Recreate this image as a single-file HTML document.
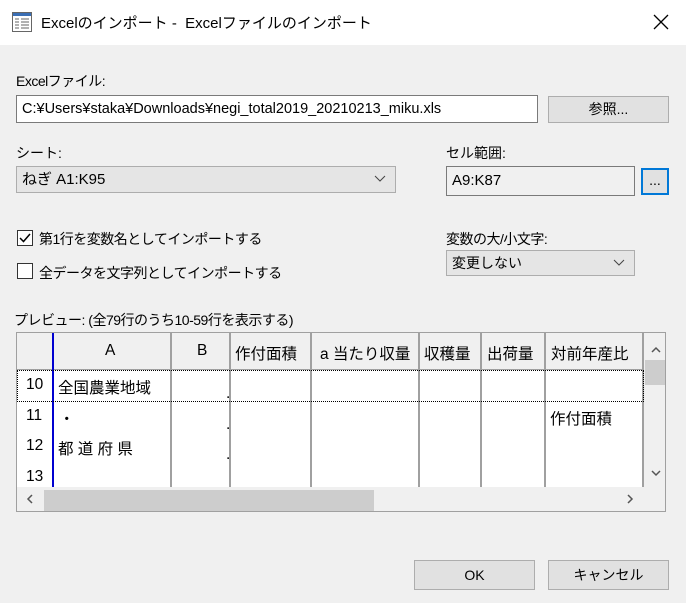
<!DOCTYPE html><html><head><meta charset="utf-8"><style>
*{box-sizing:border-box}body{margin:0;width:686px;height:603px;background:#f0f0f0;font-family:"Liberation Sans","Noto Sans CJK JP",sans-serif;font-size:14px;color:#000;position:relative;overflow:hidden}
.a{position:absolute}
.title{left:0;top:0;width:686px;height:45px;background:#fff}
.box{background:#fff;border:1px solid #7a7a7a;padding:0 5px;line-height:26px;white-space:nowrap}
.btn{background:#e1e1e1;border:1px solid #adadad;text-align:center}
.sel{background:#e5e5e5;border:1px solid #adadad;padding-left:5px}
.cb{width:16px;height:16px;border:1px solid #333;background:#fff}
.c{position:absolute;border-right:2px solid #a0a0a0;height:100%;top:0}
.g{font-size:15.5px}
.n{letter-spacing:-0.5px}
</style></head><body>
<div class="a title"></div>
<svg class="a" style="left:12px;top:12px" width="20" height="21"><rect x="0.5" y="0.5" width="19" height="19" fill="#fff" stroke="#666"/><rect x="1" y="1" width="18" height="3" fill="#3b6fb5"/><path d="M3 7h4M3 10h4M3 13h4M3 16h4M9 7h8M9 10h8M9 13h8M9 16h8" stroke="#666"/></svg>
<div class="a" style="left:41px;top:12px;font-size:15px">Excelのインポート -&nbsp; Excelファイルのインポート</div>
<svg class="a" style="left:653px;top:14px" width="16" height="16"><path d="M1 1L15 15M15 1L1 15" stroke="#000" stroke-width="1.3"/></svg>
<div class="a n" style="left:16px;top:71px">Excelファイル:</div>
<div class="a box" style="left:16px;top:95px;width:522px;height:28px;font-size:14.5px">C:¥Users¥staka¥Downloads¥negi_total2019_20210213_miku.xls</div>
<div class="a btn" style="left:548px;top:96px;width:121px;height:27px;line-height:25px">参照...</div>
<div class="a" style="left:16px;top:143px">シート:</div>
<div class="a sel" style="left:16px;top:166px;width:380px;height:27px;line-height:25px;font-size:15px">ねぎ A1:K95</div>
<svg class="a" style="left:374px;top:175px" width="12" height="8"><path d="M1 1l5 5 5-5" fill="none" stroke="#444"/></svg>
<div class="a" style="left:446px;top:143px">セル範囲:</div>
<div class="a box" style="left:446px;top:166px;width:189px;height:30px;background:#f0f0f0;border-color:#7a7a7a;line-height:28px;font-size:15px">A9:K87</div>
<div class="a btn" style="left:641px;top:168px;width:28px;height:27px;border:2px solid #0078d7;line-height:20px">...</div>
<div class="a cb" style="left:17px;top:230px"></div>
<svg class="a" style="left:18px;top:231px" width="14" height="14"><path d="M2 7l3.5 3.5L12 3" fill="none" stroke="#000" stroke-width="1.5"/></svg>
<div class="a n" style="left:39px;top:229px">第1行を変数名としてインポートする</div>
<div class="a cb" style="left:17px;top:263px"></div>
<div class="a n" style="left:39px;top:263px">全データを文字列としてインポートする</div>
<div class="a n" style="left:446px;top:229px">変数の大/小文字:</div>
<div class="a sel" style="left:446px;top:250px;width:189px;height:26px;line-height:24px">変更しない</div>
<svg class="a" style="left:613px;top:259px" width="12" height="8"><path d="M1 1l5 5 5-5" fill="none" stroke="#444"/></svg>
<div class="a n" style="left:14px;top:310px">プレビュー: (全79行のうち10-59行を表示する)</div>
<div class="a g" style="left:16px;top:332px;width:650px;height:180px;border:1px solid #a0a0a0;background:#fff;overflow:hidden">
 <div class="a" style="left:0;top:0;width:627px;height:37px;background:#f0f0f0;border-bottom:1px solid #a0a0a0"></div>
 <div class="c" style="left:153px;height:154px"></div><div class="c" style="left:212px;height:154px"></div><div class="c" style="left:293px;height:154px"></div><div class="c" style="left:401px;height:154px"></div><div class="c" style="left:463px;height:154px"></div><div class="c" style="left:527px;height:154px"></div><div class="c" style="left:625px;height:154px"></div>
 <div class="a" style="left:35px;top:0;width:2px;height:154px;background:#0000d0"></div>
 <div class="a" style="left:0;top:37px;width:627px;height:32px;border:1px dotted #000"></div>
 <div class="a" style="top:9px;left:88px">A</div><div class="a" style="top:9px;left:180px">B</div>
 <div class="a" style="top:9px;left:218px">作付面積</div><div class="a" style="top:9px;left:303px">a 当たり収量</div><div class="a" style="top:9px;left:407px">収穫量</div><div class="a" style="top:9px;left:470px">出荷量</div><div class="a" style="top:9px;left:534px">対前年産比</div>
 <div class="a" style="top:43px;left:9px">10</div><div class="a" style="top:43px;left:41px">全国農業地域</div>
 <div class="a" style="top:74px;left:9px">11</div><div class="a" style="top:74px;left:42px">・</div><div class="a" style="top:74px;left:533px">作付面積</div>
 <div class="a" style="top:104px;left:9px">12</div><div class="a" style="top:104px;left:41px">都 道 府 県</div>
 <div class="a" style="top:135px;left:9px">13</div>
 <div class="a" style="top:52px;left:209px">.</div><div class="a" style="top:83px;left:209px">.</div><div class="a" style="top:113px;left:209px">.</div><div class="a" style="top:143px;left:209px">.</div>
 <div class="a" style="left:0;top:154px;width:627px;height:25px;background:#f0f0f0"></div>
 <div class="a" style="left:27px;top:157px;width:330px;height:21px;background:#cdcdcd"></div>
 <div class="a" style="left:627px;top:0;width:22px;height:180px;background:#f0f0f0"></div>
 <div class="a" style="left:628px;top:27px;width:22px;height:25px;background:#cdcdcd"></div>
 <svg class="a" style="left:634px;top:13px" width="10" height="8"><path d="M1 6l4-4 4 4" fill="none" stroke="#555" stroke-width="1.5"/></svg>
 <svg class="a" style="left:634px;top:136px" width="10" height="8"><path d="M1 2l4 4 4-4" fill="none" stroke="#555" stroke-width="1.5"/></svg>
 <svg class="a" style="left:9px;top:161px" width="8" height="10"><path d="M6 1L2 5l4 4" fill="none" stroke="#555" stroke-width="1.5"/></svg>
 <svg class="a" style="left:609px;top:161px" width="8" height="10"><path d="M2 1l4 4-4 4" fill="none" stroke="#555" stroke-width="1.5"/></svg>
</div>
<div class="a btn" style="left:414px;top:560px;width:121px;height:30px;line-height:28px">OK</div>
<div class="a btn" style="left:548px;top:560px;width:121px;height:30px;line-height:28px">キャンセル</div>
</body></html>
